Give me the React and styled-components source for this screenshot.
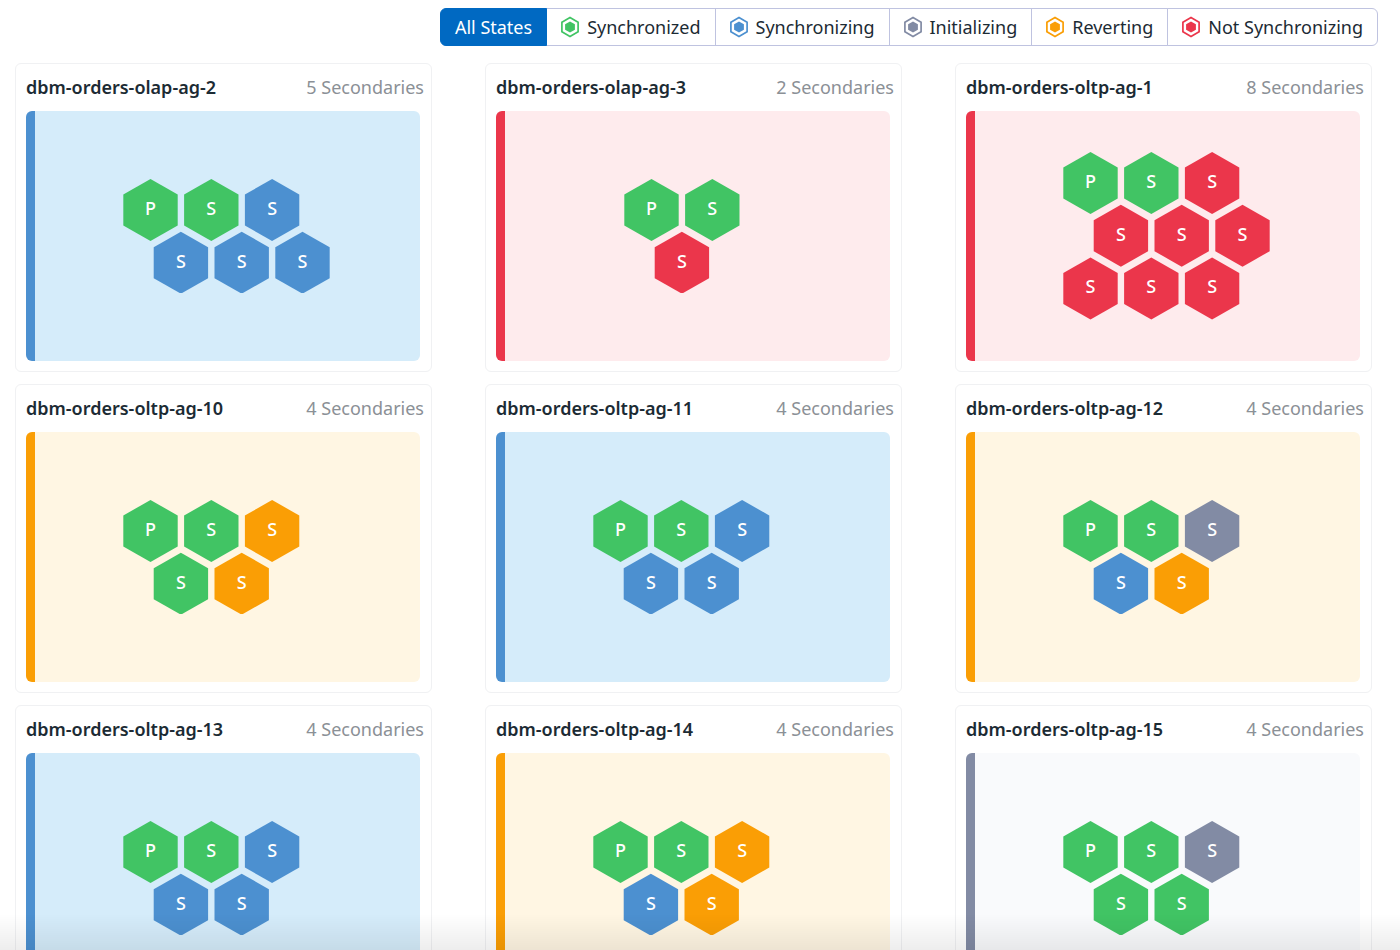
import React, { useState } from "react";
import styled, { createGlobalStyle } from "styled-components";

const STATES = {
  synchronized: { label: "Synchronized", color: "#41c464", tint: "#eaf8ed" },
  synchronizing: { label: "Synchronizing", color: "#4c90d0", tint: "#d5ecfa" },
  initializing: { label: "Initializing", color: "#828ba4", tint: "#f9fafc" },
  reverting: { label: "Reverting", color: "#fa9e05", tint: "#fff6e3" },
  notSynchronizing: {
    label: "Not Synchronizing",
    color: "#eb364b",
    tint: "#feebed",
  },
};

const G = "synchronized";
const B = "synchronizing";
const I = "initializing";
const O = "reverting";
const R = "notSynchronizing";

const GROUPS = [
  { name: "dbm-orders-olap-ag-2", state: B, replicas: [G, G, B, B, B, B] },
  { name: "dbm-orders-olap-ag-3", state: R, replicas: [G, G, R] },
  {
    name: "dbm-orders-oltp-ag-1",
    state: R,
    replicas: [G, G, R, R, R, R, R, R, R],
  },
  { name: "dbm-orders-oltp-ag-10", state: O, replicas: [G, G, O, G, O] },
  { name: "dbm-orders-oltp-ag-11", state: B, replicas: [G, G, B, B, B] },
  { name: "dbm-orders-oltp-ag-12", state: O, replicas: [G, G, I, B, O] },
  { name: "dbm-orders-oltp-ag-13", state: B, replicas: [G, G, B, B, B] },
  { name: "dbm-orders-oltp-ag-14", state: O, replicas: [G, G, O, B, O] },
  { name: "dbm-orders-oltp-ag-15", state: I, replicas: [G, G, I, G, G] },
];

const GlobalStyle = createGlobalStyle`
  * {
    box-sizing: border-box;
  }
  body {
    margin: 0;
    background-color: #ffffff;
    font-family: "Noto Sans", sans-serif;
    color: #1c2b34;
  }
`;

const Page = styled.main`
  height: 100vh;
  overflow-y: auto;
  scrollbar-width: none;
  padding: 8px 28px 12px 15px;
`;

const FilterBar = styled.div`
  display: flex;
  justify-content: flex-end;
  margin-right: -6px;
  margin-bottom: 17px;
`;

const FilterButton = styled.button`
  height: 38px;
  margin: 0 0 0 -1px;
  padding: 0 14px;
  display: flex;
  align-items: center;
  gap: 8px;
  border: 1px solid ${(props) => (props.$active ? "#0069c2" : "#bfc3e0")};
  background-color: ${(props) => (props.$active ? "#0069c2" : "#ffffff")};
  color: ${(props) => (props.$active ? "#ffffff" : "#1c2b34")};
  font-family: inherit;
  font-size: 18px;
  line-height: 24px;
  white-space: nowrap;
  cursor: pointer;
  position: relative;
  z-index: ${(props) => (props.$active ? 1 : 0)};

  &:first-child {
    border-radius: 6px 0 0 6px;
  }
  &:last-child {
    border-radius: 0 6px 6px 0;
  }
`;

const CardGrid = styled.div`
  display: grid;
  grid-template-columns: repeat(3, 1fr);
  gap: 12px 53px;
`;

const Card = styled.section`
  border: 1px solid #f0f1f3;
  border-radius: 6px;
  padding-bottom: 10px;
`;

const CardHeader = styled.header`
  height: 47px;
  padding: 0 7px 2px 10px;
  display: flex;
  align-items: center;
  justify-content: space-between;
`;

const CardTitle = styled.h2`
  margin: 0;
  font-size: 18px;
  line-height: 24px;
  font-weight: 600;
`;

const CardCount = styled.span`
  font-size: 18px;
  line-height: 24px;
  color: #8b9096;
`;

const Panel = styled.div`
  height: 250px;
  margin: 0 11px 0 10px;
  display: flex;
  align-items: center;
  justify-content: center;
  border-left: 9px solid ${(props) => STATES[props.$state].color};
  border-radius: 6px;
  background-color: ${(props) => STATES[props.$state].tint};
`;

const HexLabel = styled.text`
  fill: #ffffff;
  font-size: 18px;
  font-weight: 500;
  text-anchor: middle;
`;

const BottomFade = styled.div`
  position: fixed;
  left: 0;
  right: 0;
  bottom: 0;
  height: 36px;
  pointer-events: none;
  z-index: 2;
  background: linear-gradient(rgba(0, 0, 0, 0), rgba(0, 0, 0, 0.07));
`;

const StateIcon = ({ color }) => (
  <svg width="18" height="22" viewBox="1 0 18 22" aria-hidden="true">
    <path
      d="M10 1.6 18.1 6.3V15.7L10 20.4 1.9 15.7V6.3Z"
      fill="none"
      stroke={color}
      strokeWidth="1.7"
    />
    <path d="M10 5.4 14.9 8.2V13.8L10 16.6 5.1 13.8V8.2Z" fill={color} />
  </svg>
);

const PITCH_X = 60.8;
const PITCH_Y = 52.7;

const HexMap = ({ replicas }) => {
  const cols = replicas.length > 4 ? 3 : 2;
  const rows = Math.ceil(replicas.length / cols);
  const width = cols * 63 + 27;
  const height = 62 + (rows - 1) * PITCH_Y;

  return (
    <svg width={width} height={height} viewBox={`0 0 ${width} ${height}`}>
      {replicas.map((state, i) => {
        const row = Math.floor(i / cols);
        // odd rows are shifted by half a cell
        const x = 30.5 + ((i % cols) + (row % 2) / 2) * PITCH_X;
        const y = 31 + row * PITCH_Y;
        return (
          <g key={i} transform={`translate(${x} ${y})`}>
            <path
              d="M0 -31 27.2 -15.5V15.5L0 31 -27.2 15.5V-15.5Z"
              fill={STATES[state].color}
            />
            <HexLabel y="5">{i === 0 ? "P" : "S"}</HexLabel>
          </g>
        );
      })}
    </svg>
  );
};

const App = () => {
  const [filter, setFilter] = useState("all");
  const groups = GROUPS.filter(
    (group) => filter === "all" || group.replicas.includes(filter)
  );

  return (
    <>
      <GlobalStyle />
      <Page>
        <FilterBar>
          <FilterButton
            $active={filter === "all"}
            onClick={() => setFilter("all")}
          >
            All States
          </FilterButton>
          {Object.entries(STATES).map(([key, state]) => (
            <FilterButton
              key={key}
              $active={filter === key}
              onClick={() => setFilter(key)}
            >
              <StateIcon color={filter === key ? "#ffffff" : state.color} />
              {state.label}
            </FilterButton>
          ))}
        </FilterBar>
        <CardGrid>
          {groups.map((group) => (
            <Card key={group.name}>
              <CardHeader>
                <CardTitle>{group.name}</CardTitle>
                <CardCount>{group.replicas.length - 1} Secondaries</CardCount>
              </CardHeader>
              <Panel $state={group.state}>
                <HexMap replicas={group.replicas} />
              </Panel>
            </Card>
          ))}
        </CardGrid>
      </Page>
      <BottomFade />
    </>
  );
};

export default App;
